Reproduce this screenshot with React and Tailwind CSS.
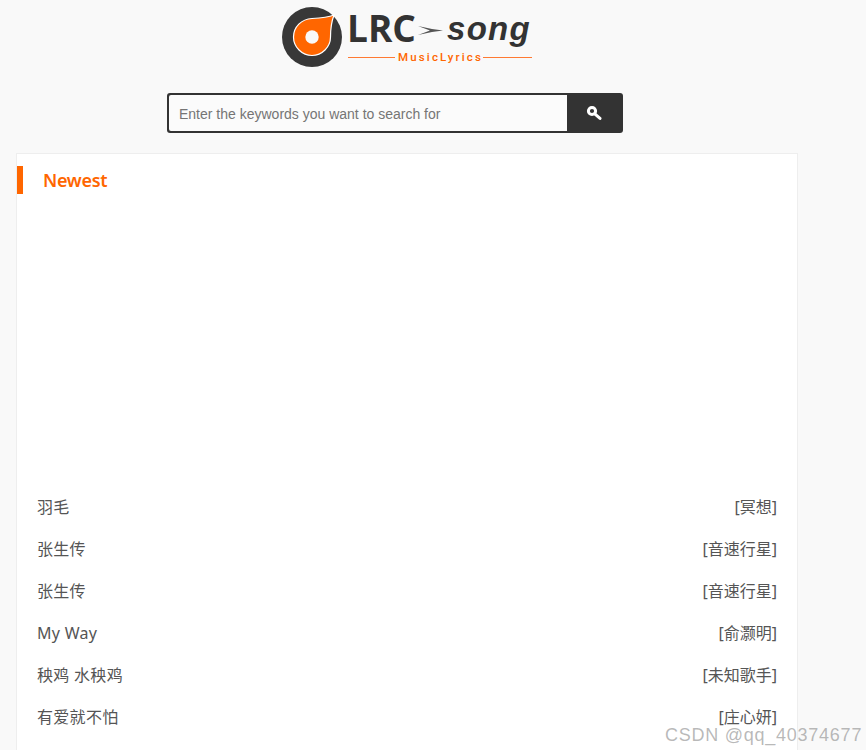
const rows = [
  ["羽毛", "[冥想]"],
  ["张生传", "[音速行星]"],
  ["张生传", "[音速行星]"],
  ["My Way", "[俞灏明]"],
  ["秧鸡 水秧鸡", "[未知歌手]"],
  ["有爱就不怕", "[庄心妍]"],
];

function Logo() {
  return (
    <svg width="252" height="62" viewBox="0 0 252 62" className="block overflow-visible">
      <circle cx="30" cy="30" r="30" fill="#383838" />
      <path d="M52 8 C47 10 40 11 30 11.5 C19.5 12 11.5 20 11.5 30 C11.5 40 20 48.5 30 48.5 C40 48.5 48.5 40 48.5 30 C48.5 23 49 16 52 8 Z" fill="#ff6600" stroke="#ffffff" strokeWidth="1.2" />
      <circle cx="30" cy="30" r="6.7" fill="#f9f9f9" />
      <text x="65" y="35" fontFamily="'Open Sans', sans-serif" fontWeight="700" fontSize="37" fill="#333333">LRC</text>
      <path d="M136 19 L150 22 L161 23.5 L150 25 L136 28 L148 23.5 Z" fill="#555555" />
      <text x="165" y="33" fontFamily="'Liberation Sans', sans-serif" fontWeight="700" fontStyle="italic" fontSize="33" fill="#333333" letterSpacing="1.3">song</text>
      <rect x="66" y="50" width="47" height="1" fill="#ff7a33" />
      <rect x="201" y="50" width="49" height="1" fill="#ff7a33" />
      <text x="116" y="54" fontFamily="'Roboto', sans-serif" fontWeight="500" fontSize="11.5" fill="#ff6600" letterSpacing="2.15">MusicLyrics</text>
    </svg>
  );
}

export default function App() {
  return (
    <div className="relative h-[750px] overflow-hidden bg-[#f9f9f9] font-['Noto_Sans','Noto_Sans_CJK_SC',sans-serif]">
      <div className="flex w-[816px] justify-center pt-[7px]">
        <Logo />
      </div>
      <div className="mt-[24px] ml-[167px] flex h-[40px] w-[456px] rounded-[3px] bg-[#333333] p-[2px]">
        <div className="flex flex-1 items-center rounded-l-[2px] bg-[#fbfbfb] pt-[2px] pl-[10px] font-['Liberation_Sans',sans-serif] text-[14px] text-[#757575]">
          Enter the keywords you want to search for
        </div>
        <div className="flex w-[54px] items-center justify-center">
          <svg width="16" height="16" viewBox="0 0 16 16">
            <circle cx="6" cy="6" r="3.6" fill="none" stroke="#ffffff" strokeWidth="3" />
            <path d="M8.8 8.8 L14 13.4" stroke="#ffffff" strokeWidth="3" strokeLinecap="round" />
          </svg>
        </div>
      </div>
      <div className="mt-[20px] ml-[16px] h-[700px] w-[782px] border border-[#eeeeee] bg-white">
        <div className="mt-[12px] flex h-[28px] items-center border-l-[6px] border-[#ff6600] pl-[20px] text-[18px] font-semibold leading-none tracking-[-0.3px] text-[#ff6600]">
          Newest
        </div>
        <div className="mt-[292px] flex flex-col px-[20px] text-[16px] text-[#555555]">
          {rows.map(([title, artist], i) => (
            <div key={i} className="flex h-[42px] items-center justify-between">
              <span className="tracking-[0.3px]">{title}</span>
              <span>{artist}</span>
            </div>
          ))}
        </div>
      </div>
      <div className="absolute left-[665px] top-[725px] font-['Liberation_Sans',sans-serif] text-[18px] leading-[20px] tracking-[0.75px] text-[#8a8a8a]/60">
        CSDN @qq_40374677
      </div>
    </div>
  );
}
